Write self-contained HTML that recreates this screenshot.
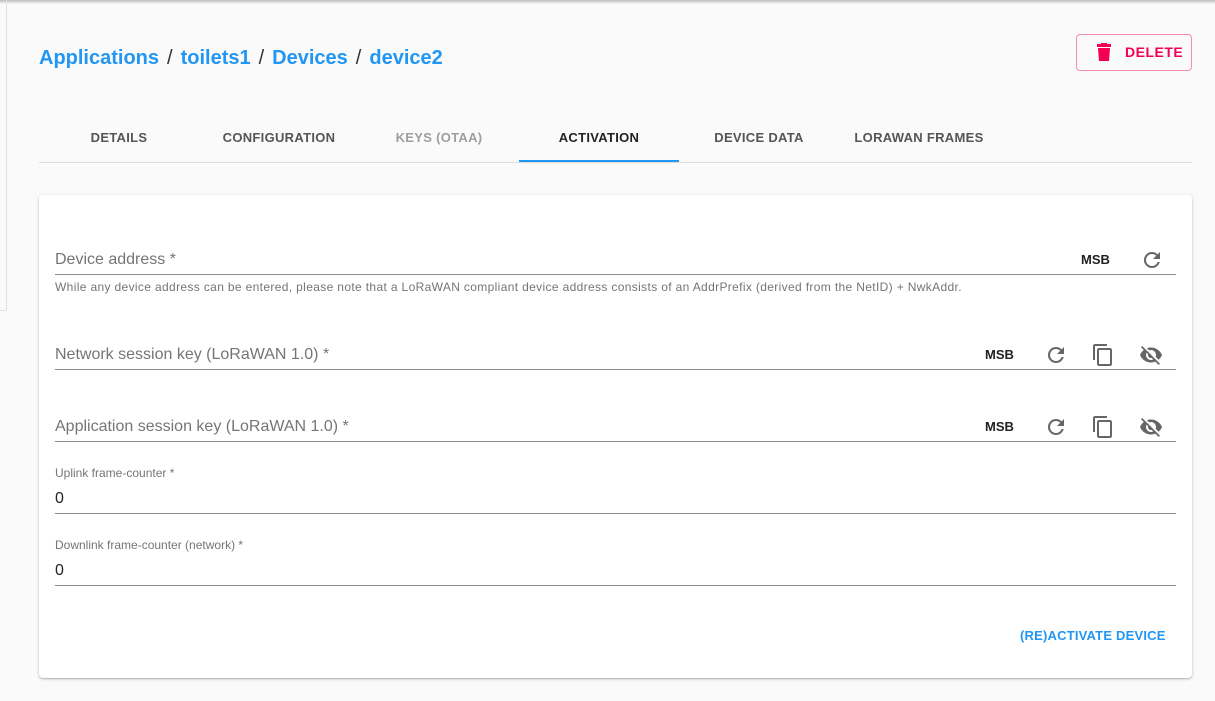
<!DOCTYPE html>
<html><head><meta charset="utf-8"><style>
*{box-sizing:border-box;margin:0;padding:0}
body{width:1215px;height:701px;background:#fafafa;font-family:"Liberation Sans",Roboto,sans-serif;position:relative;overflow:hidden}
.topsh{position:absolute;left:0;top:0;width:1215px;height:4px;background:linear-gradient(#bbb,#fafafa)}
.vl{position:absolute;left:6px;top:0;width:1px;height:310px;background:#e0e0e0}
.vl2{position:absolute;left:0;top:310px;width:6px;height:1px;background:#e0e0e0}
.bc{position:absolute;left:39px;top:47px;font-size:20px;color:#2196f3;white-space:nowrap;font-weight:bold}
.bc span.s{color:#333;margin:0 8px;font-weight:normal}
.del{position:absolute;left:1076px;top:34px;width:116px;height:37px;border:1px solid #f48fb1;border-radius:4px;color:#f50057;font-size:14px;letter-spacing:.5px;font-weight:bold}
.del svg{position:absolute;left:19px;top:8px}
.del span{position:absolute;left:48px;top:9px}
.tabs{position:absolute;left:39px;top:114px;width:1153px;height:49px;border-bottom:1px solid #ddd}
.tab{position:absolute;top:16px;width:160px;text-align:center;font-size:13px;color:#555;letter-spacing:.3px;font-weight:bold}
.ind{position:absolute;left:480px;top:46px;width:160px;height:2px;background:#2196f3}
.card{position:absolute;left:39px;top:195px;width:1153px;height:483px;background:#fff;border-radius:4px;box-shadow:0 1px 3px rgba(0,0,0,.2),0 1px 1px rgba(0,0,0,.14)}
.f{position:absolute;left:16px;width:1121px;border-bottom:1px solid #8c8c8c}
.lbl{position:absolute;left:0;font-size:16px;color:#757575}
.msb{position:absolute;font-size:13px;color:#222;font-weight:600}
.ic{position:absolute}
.help{position:absolute;left:16px;top:85px;font-size:12px;letter-spacing:.35px;color:#757575;white-space:nowrap}
.sm{position:absolute;left:0;font-size:12px;color:#757575}
.val{position:absolute;left:0;font-size:16px;color:#222}
.btn{position:absolute;left:981px;top:433px;font-size:13px;color:#2196f3;letter-spacing:.2px;font-weight:bold}
</style></head><body>
<div class="topsh"></div><div class="vl"></div><div class="vl2"></div>
<div class="bc">Applications<span class="s">/</span>toilets1<span class="s">/</span>Devices<span class="s">/</span>device2</div>
<div class="del"><svg width="16" height="18" viewBox="0 0 16 18"><rect x="1" y="1" width="14" height="3" fill="#f50057"/><rect x="5" y="0" width="6" height="2" fill="#f50057"/><path d="M2 5h12l-1 13H3z" fill="#f50057"/></svg><span>DELETE</span></div>
<div class="tabs">
<div class="tab" style="left:0">DETAILS</div>
<div class="tab" style="left:160px">CONFIGURATION</div>
<div class="tab" style="left:320px;color:#9e9e9e">KEYS (OTAA)</div>
<div class="tab" style="left:480px;color:#222">ACTIVATION</div>
<div class="tab" style="left:640px">DEVICE DATA</div>
<div class="tab" style="left:800px">LORAWAN FRAMES</div>
<div class="ind"></div>
</div>
<div class="card">
<div class="f" style="top:50px;height:30px"><div class="lbl" style="top:6px">Device address *</div>
<div class="msb" style="left:1026px;top:7px">MSB</div>
<svg class="ic" style="left:1085px;top:3px" width="24" height="24" viewBox="0 0 24 24"><path fill="#666" d="M17.65 6.35A7.95 7.95 0 0 0 12 4a8 8 0 1 0 7.73 10h-2.08A6 6 0 1 1 12 6c1.66 0 3.14.69 4.22 1.78L13 11h7V4l-2.35 2.35z"/></svg></div>
<div class="help">While any device address can be entered, please note that a LoRaWAN compliant device address consists of an AddrPrefix (derived from the NetID) + NwkAddr.</div>
<div class="f" style="top:145px;height:30px"><div class="lbl" style="top:6px">Network session key (LoRaWAN 1.0) *</div>
<div class="msb" style="left:930px;top:7px">MSB</div>
<svg class="ic" style="left:989px;top:3px" width="24" height="24" viewBox="0 0 24 24"><path fill="#666" d="M17.65 6.35A7.95 7.95 0 0 0 12 4a8 8 0 1 0 7.73 10h-2.08A6 6 0 1 1 12 6c1.66 0 3.14.69 4.22 1.78L13 11h7V4l-2.35 2.35z"/></svg>
<svg class="ic" style="left:1036px;top:3px" width="24" height="24" viewBox="0 0 24 24"><path fill="#666" d="M16 1H4c-1.1 0-2 .9-2 2v14h2V3h12V1zm3 4H8c-1.1 0-2 .9-2 2v14c0 1.1.9 2 2 2h11c1.1 0 2-.9 2-2V7c0-1.1-.9-2-2-2zm0 16H8V7h11v14z"/></svg>
<svg class="ic" style="left:1084px;top:3px" width="24" height="24" viewBox="0 0 24 24"><path fill="#666" d="M12 7c2.76 0 5 2.240 5 5 0 .65-.13 1.26-.36 1.83l2.92 2.92c1.51-1.26 2.7-2.89 3.430-4.75-1.73-4.39-6-7.5-11-7.5-1.4 0-2.74.25-3.98.7l2.16 2.16C10.74 7.13 11.35 7 12 7zM2 4.27l2.28 2.28.46.46A11.8 11.8 0 0 0 1 12c1.73 4.39 6 7.5 11 7.5 1.55 0 3.03-.3 4.38-.84l.42.42L19.73 22 21 20.73 3.27 3 2 4.27zM7.53 9.8l1.55 1.55c-.05.21-.08.43-.08.65 0 1.66 1.34 3 3 3 .22 0 .44-.03.65-.08l1.55 1.55c-.67.33-1.41.53-2.2.53-2.76 0-5-2.24-5-5 0-.79.2-1.53.53-2.2z"/></svg></div>
<div class="f" style="top:217px;height:30px"><div class="lbl" style="top:6px">Application session key (LoRaWAN 1.0) *</div>
<div class="msb" style="left:930px;top:7px">MSB</div>
<svg class="ic" style="left:989px;top:3px" width="24" height="24" viewBox="0 0 24 24"><path fill="#666" d="M17.65 6.35A7.95 7.95 0 0 0 12 4a8 8 0 1 0 7.73 10h-2.08A6 6 0 1 1 12 6c1.66 0 3.14.69 4.22 1.78L13 11h7V4l-2.35 2.35z"/></svg>
<svg class="ic" style="left:1036px;top:3px" width="24" height="24" viewBox="0 0 24 24"><path fill="#666" d="M16 1H4c-1.1 0-2 .9-2 2v14h2V3h12V1zm3 4H8c-1.1 0-2 .9-2 2v14c0 1.1.9 2 2 2h11c1.1 0 2-.9 2-2V7c0-1.1-.9-2-2-2zm0 16H8V7h11v14z"/></svg>
<svg class="ic" style="left:1084px;top:3px" width="24" height="24" viewBox="0 0 24 24"><path fill="#666" d="M12 7c2.76 0 5 2.24 5 5 0 .65-.13 1.26-.36 1.83l2.92 2.92c1.51-1.26 2.7-2.89 3.43-4.75-1.73-4.39-6-7.5-11-7.5-1.4 0-2.74.25-3.98.7l2.16 2.16C10.74 7.13 11.35 7 12 7zM2 4.27l2.28 2.28.46.46A11.8 11.8 0 0 0 1 12c1.73 4.39 6 7.5 11 7.5 1.55 0 3.03-.3 4.38-.84l.42.42L19.73 22 21 20.73 3.27 3 2 4.27zM7.53 9.8l1.55 1.55c-.05.21-.08.43-.08.65 0 1.66 1.34 3 3 3 .22 0 .44-.03.65-.08l1.55 1.55c-.67.33-1.41.53-2.2.53-2.76 0-5-2.24-5-5 0-.79.2-1.53.53-2.2z"/></svg></div>
<div class="f" style="top:270px;height:49px"><div class="sm" style="top:1px">Uplink frame-counter *</div><div class="val" style="top:25px">0</div></div>
<div class="f" style="top:342px;height:49px"><div class="sm" style="top:1px">Downlink frame-counter (network) *</div><div class="val" style="top:25px">0</div></div>
<div class="btn">(RE)ACTIVATE DEVICE</div>
</div>
</body></html>
